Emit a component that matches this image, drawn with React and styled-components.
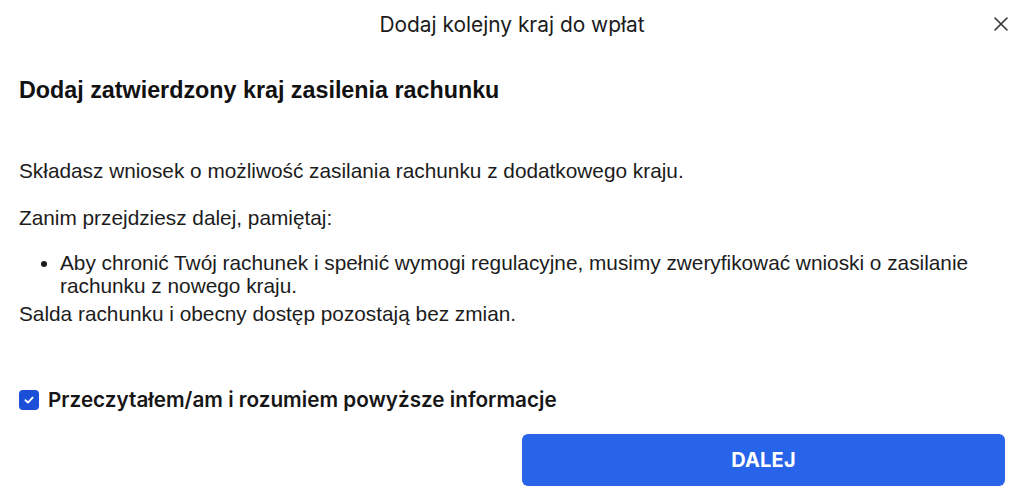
import React from "react";
import styled, { createGlobalStyle } from "styled-components";

const Global = createGlobalStyle`
  html, body { margin: 0; padding: 0; background: #fff; }
  body { width: 1024px; height: 503px; overflow: hidden; }
  * { box-sizing: border-box; }
`;

const Dialog = styled.div`
  width: 1024px;
  height: 503px;
  display: flex;
  flex-direction: column;
  background: #fff;
  color: #1a1a1a;
`;

const Header = styled.div`
  position: relative;
  height: 48px;
  display: flex;
  align-items: center;
  justify-content: center;
`;

const Title = styled.h1`
  margin: 0;
  font-family: Inter, "Noto Sans", sans-serif;
  font-weight: 400;
  font-size: 20.9px;
  color: #1b1b1b;
`;

const Close = styled.button`
  position: absolute;
  right: 14px;
  top: 15px;
  width: 18px;
  height: 18px;
  padding: 0;
  border: 0;
  background: none;
  display: flex;
  align-items: center;
  justify-content: center;
  cursor: pointer;
`;

const Body = styled.div`
  padding: 0 19px;
  font-family: "Liberation Sans", Arial, sans-serif;
  font-size: 20.8px;
  color: #1c1c1c;
`;

const Heading = styled.h2`
  margin: 29px 0 0;
  font-family: "Liberation Sans", Arial, sans-serif;
  font-weight: 700;
  font-size: 23.3px;
  line-height: 26px;
  color: #111;
`;

const Para = styled.p`
  margin: ${(p) => p.$top}px 0 0;
  line-height: 23px;
`;

const List = styled.ul`
  margin: 22px 0 0;
  padding-left: 41px;
  line-height: 23px;
`;

const Item = styled.li`
  margin: 0;
`;

const CheckRow = styled.label`
  margin-top: 63px;
  display: flex;
  align-items: center;
  gap: 9px;
  font-family: Inter, "Noto Sans", sans-serif;
  font-weight: 600;
  font-size: 20.7px;
  line-height: 24px;
  color: #161616;
`;

const Box = styled.span`
  width: 20px;
  height: 20px;
  border-radius: 4px;
  background: #1c4fd8;
  display: flex;
  align-items: center;
  justify-content: center;
  flex-shrink: 0;
`;

const Footer = styled.div`
  display: flex;
  justify-content: flex-end;
  padding: 22px 19px 0;
`;

const Button = styled.button`
  width: 483px;
  height: 52px;
  border: 0;
  border-radius: 6px;
  background: #2864ea;
  color: #fff;
  font-family: Inter, "Noto Sans", sans-serif;
  font-weight: 700;
  font-size: 20px;
  letter-spacing: 0.2px;
  cursor: pointer;
`;

export default function App() {
  return (
    <>
      <Global />
      <Dialog>
        <Header>
          <Title>Dodaj kolejny kraj do wpłat</Title>
          <Close aria-label="Zamknij">
            <svg width="14" height="14" viewBox="0 0 14 14">
              <path d="M1 1L13 13M13 1L1 13" stroke="#333" strokeWidth="1.6" strokeLinecap="round" />
            </svg>
          </Close>
        </Header>
        <Body>
          <Heading>Dodaj zatwierdzony kraj zasilenia rachunku</Heading>
          <Para $top={56}>Składasz wniosek o możliwość zasilania rachunku z dodatkowego kraju.</Para>
          <Para $top={24}>Zanim przejdziesz dalej, pamiętaj:</Para>
          <List>
            <Item>
              Aby chronić Twój rachunek i spełnić wymogi regulacyjne, musimy zweryfikować wnioski o zasilanie rachunku z nowego kraju.
            </Item>
          </List>
          <Para $top={5}>Salda rachunku i obecny dostęp pozostają bez zmian.</Para>
          <CheckRow>
            <Box>
              <svg width="12" height="12" viewBox="0 0 12 12">
                <path d="M2.5 6.2L5 8.6L9.6 3.6" stroke="#fff" strokeWidth="1.9" fill="none" strokeLinecap="round" strokeLinejoin="round" />
              </svg>
            </Box>
            Przeczytałem/am i rozumiem powyższe informacje
          </CheckRow>
        </Body>
        <Footer>
          <Button>DALEJ</Button>
        </Footer>
      </Dialog>
    </>
  );
}
